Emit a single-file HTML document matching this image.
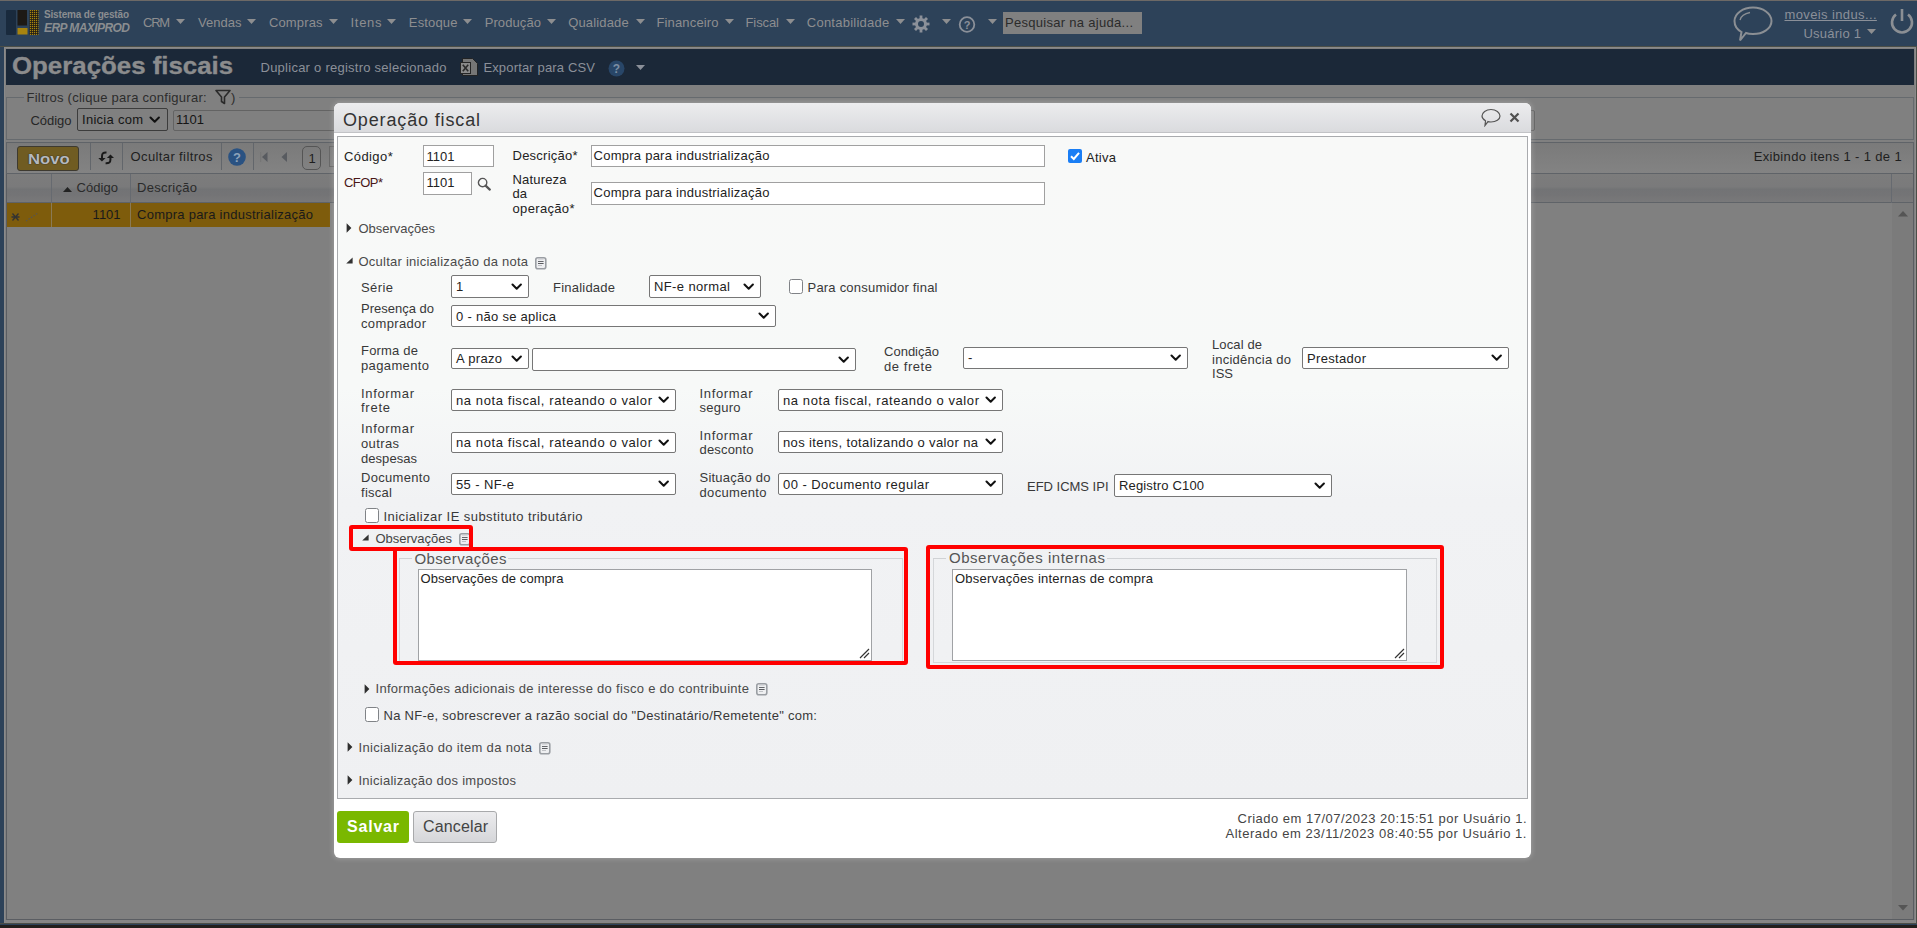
<!DOCTYPE html><html><head><meta charset="utf-8"><style>html,body{margin:0;padding:0;width:1917px;height:928px;overflow:hidden;position:relative;background:#808080;font-family:"Liberation Sans",sans-serif}</style></head><body><div style="position:absolute;left:0px;top:0px;width:1917px;height:1px;box-sizing:border-box;background:#6d6966"></div>
<div style="position:absolute;left:0px;top:1px;width:1917px;height:45px;box-sizing:border-box;background:#2d4259"></div>
<div style="position:absolute;left:0px;top:46px;width:4px;height:879px;box-sizing:border-box;background:#2d4259"></div>
<div style="position:absolute;left:0px;top:46px;width:1917px;height:1px;box-sizing:border-box;background:#4b4e47"></div>
<div style="position:absolute;left:4px;top:47px;width:1912px;height:876px;box-sizing:border-box;background:#8a8a8a"></div>
<div style="position:absolute;left:5px;top:48px;width:1910px;height:874px;box-sizing:border-box;background:#808080"></div>
<div style="position:absolute;left:1916px;top:46px;width:1px;height:879px;box-sizing:border-box;background:#4b4e47"></div>
<div style="position:absolute;left:5px;top:920px;width:1910px;height:3px;box-sizing:border-box;background:#868686"></div>
<div style="position:absolute;left:0px;top:923px;width:1917px;height:1px;box-sizing:border-box;background:#4b4e47"></div>
<div style="position:absolute;left:0px;top:924px;width:1917px;height:1px;box-sizing:border-box;background:#2d4259"></div>
<div style="position:absolute;left:0px;top:925px;width:1917px;height:3px;box-sizing:border-box;background:#221f1c"></div>
<div style="position:absolute;left:6px;top:49px;width:1908px;height:36px;box-sizing:border-box;background:#1b2838"></div>
<svg style="position:absolute;left:6px;top:10px" width="34" height="26"><defs><pattern id="gd" width="2" height="2" patternUnits="userSpaceOnUse"><rect width="2" height="2" fill="#1e1a14"/><rect width="1.2" height="1.2" fill="#a8840f"/></pattern></defs><rect x="0" y="0" width="10" height="25" rx="1" fill="#192a3d"/><rect x="11.5" y="0" width="9.5" height="15.5" fill="#1d1915"/><rect x="11.5" y="18" width="10" height="6.5" fill="#a8840f"/><rect x="23.5" y="0" width="9" height="25" fill="url(#gd)"/></svg>
<div style="position:absolute;left:44.00px;top:9.64px;font:bold 10px 'Liberation Sans', sans-serif;line-height:10px;color:#8a8d90;white-space:pre;letter-spacing:-0.176px;">Sistema de gestão</div>
<div style="position:absolute;left:44.00px;top:22.44px;font:bold italic 12px 'Liberation Sans', sans-serif;line-height:12px;color:#8a8d90;white-space:pre;letter-spacing:-0.567px;">ERP MAXIPROD</div>
<div style="position:absolute;left:143.10px;top:16.00px;font:13px 'Liberation Sans', sans-serif;line-height:13px;color:#8d8e90;white-space:pre;letter-spacing:-1.255px;">CRM</div>
<svg style="position:absolute;left:176.3px;top:18.5px" width="9" height="5"><path d="M0 0H9L4.5 5Z" fill="#8d8e90"/></svg>
<div style="position:absolute;left:198.00px;top:16.00px;font:13px 'Liberation Sans', sans-serif;line-height:13px;color:#8d8e90;white-space:pre;letter-spacing:0.025px;">Vendas</div>
<svg style="position:absolute;left:247px;top:18.5px" width="9" height="5"><path d="M0 0H9L4.5 5Z" fill="#8d8e90"/></svg>
<div style="position:absolute;left:269.00px;top:16.00px;font:13px 'Liberation Sans', sans-serif;line-height:13px;color:#8d8e90;white-space:pre;letter-spacing:0.125px;">Compras</div>
<svg style="position:absolute;left:329px;top:18.5px" width="9" height="5"><path d="M0 0H9L4.5 5Z" fill="#8d8e90"/></svg>
<div style="position:absolute;left:350.50px;top:16.00px;font:13px 'Liberation Sans', sans-serif;line-height:13px;color:#8d8e90;white-space:pre;letter-spacing:0.703px;">Itens</div>
<svg style="position:absolute;left:387px;top:18.5px" width="9" height="5"><path d="M0 0H9L4.5 5Z" fill="#8d8e90"/></svg>
<div style="position:absolute;left:408.80px;top:16.00px;font:13px 'Liberation Sans', sans-serif;line-height:13px;color:#8d8e90;white-space:pre;letter-spacing:0.166px;">Estoque</div>
<svg style="position:absolute;left:463px;top:18.5px" width="9" height="5"><path d="M0 0H9L4.5 5Z" fill="#8d8e90"/></svg>
<div style="position:absolute;left:484.70px;top:16.00px;font:13px 'Liberation Sans', sans-serif;line-height:13px;color:#8d8e90;white-space:pre;letter-spacing:0.092px;">Produção</div>
<svg style="position:absolute;left:547px;top:18.5px" width="9" height="5"><path d="M0 0H9L4.5 5Z" fill="#8d8e90"/></svg>
<div style="position:absolute;left:568.20px;top:16.00px;font:13px 'Liberation Sans', sans-serif;line-height:13px;color:#8d8e90;white-space:pre;letter-spacing:0.152px;">Qualidade</div>
<svg style="position:absolute;left:636px;top:18.5px" width="9" height="5"><path d="M0 0H9L4.5 5Z" fill="#8d8e90"/></svg>
<div style="position:absolute;left:656.50px;top:16.00px;font:13px 'Liberation Sans', sans-serif;line-height:13px;color:#8d8e90;white-space:pre;letter-spacing:0.144px;">Financeiro</div>
<svg style="position:absolute;left:725px;top:18.5px" width="9" height="5"><path d="M0 0H9L4.5 5Z" fill="#8d8e90"/></svg>
<div style="position:absolute;left:745.50px;top:16.00px;font:13px 'Liberation Sans', sans-serif;line-height:13px;color:#8d8e90;white-space:pre;letter-spacing:-0.091px;">Fiscal</div>
<svg style="position:absolute;left:786px;top:18.5px" width="9" height="5"><path d="M0 0H9L4.5 5Z" fill="#8d8e90"/></svg>
<div style="position:absolute;left:806.80px;top:16.00px;font:13px 'Liberation Sans', sans-serif;line-height:13px;color:#8d8e90;white-space:pre;letter-spacing:0.240px;">Contabilidade</div>
<svg style="position:absolute;left:895.6px;top:18.5px" width="9" height="5"><path d="M0 0H9L4.5 5Z" fill="#8d8e90"/></svg>
<svg style="position:absolute;left:912px;top:15px" width="18" height="18" viewBox="0 0 18 18"><g fill="#8b9099"><circle cx="9" cy="9" r="6"/><rect x="7.6" y="0.5" width="2.8" height="4" transform="rotate(0 9 9)"/><rect x="7.6" y="0.5" width="2.8" height="4" transform="rotate(45 9 9)"/><rect x="7.6" y="0.5" width="2.8" height="4" transform="rotate(90 9 9)"/><rect x="7.6" y="0.5" width="2.8" height="4" transform="rotate(135 9 9)"/><rect x="7.6" y="0.5" width="2.8" height="4" transform="rotate(180 9 9)"/><rect x="7.6" y="0.5" width="2.8" height="4" transform="rotate(225 9 9)"/><rect x="7.6" y="0.5" width="2.8" height="4" transform="rotate(270 9 9)"/><rect x="7.6" y="0.5" width="2.8" height="4" transform="rotate(315 9 9)"/></g><circle cx="9" cy="9" r="3" fill="#2d4259"/></svg>
<svg style="position:absolute;left:942px;top:19px" width="9" height="5"><path d="M0 0H9L4.5 5Z" fill="#8d8e90"/></svg>
<svg style="position:absolute;left:958px;top:16px" width="18" height="17" viewBox="0 0 18 17"><circle cx="9" cy="8.5" r="7.3" fill="none" stroke="#8b9099" stroke-width="1.8"/><text x="9" y="13" text-anchor="middle" font-family="Liberation Sans" font-weight="bold" font-size="11" fill="#8b9099">?</text></svg>
<svg style="position:absolute;left:988px;top:19px" width="9" height="5"><path d="M0 0H9L4.5 5Z" fill="#8d8e90"/></svg>
<div style="position:absolute;left:1003px;top:12px;width:139px;height:22px;box-sizing:border-box;background:#808080"></div>
<div style="position:absolute;left:1005.00px;top:16.20px;font:13px 'Liberation Sans', sans-serif;line-height:13px;color:#2b2b2b;white-space:pre;letter-spacing:0.293px;">Pesquisar na ajuda...</div>
<svg style="position:absolute;left:1733px;top:6px" width="41" height="36" viewBox="0 0 41 36"><path d="M20 1.5C30 1.5 38.5 7.5 38.5 15C38.5 22.5 30 28 20 28C17.5 28 15 27.8 13 27L7 34.5L8.5 26C4 23.5 1.5 19.5 1.5 15C1.5 7.5 10 1.5 20 1.5Z" fill="none" stroke="#8b8f94" stroke-width="2"/><path d="M7 14C8 10 12 7.5 17 6.5" fill="none" stroke="#8b8f94" stroke-width="1.3"/></svg>
<div style="position:absolute;left:1784.50px;top:8.00px;font:13px 'Liberation Sans', sans-serif;line-height:13px;color:#8b9099;white-space:pre;letter-spacing:0.378px;text-decoration:underline">moveis indus...</div>
<div style="position:absolute;left:1803.50px;top:26.50px;font:13px 'Liberation Sans', sans-serif;line-height:13px;color:#8b9099;white-space:pre;letter-spacing:0.232px;">Usuário 1</div>
<svg style="position:absolute;left:1867px;top:29px" width="9" height="5"><path d="M0 0H9L4.5 5Z" fill="#8d8e90"/></svg>
<svg style="position:absolute;left:1889px;top:8px" width="26" height="27" viewBox="0 0 26 27"><path d="M7 6.5A10 10 0 1 0 19 6.5" fill="none" stroke="#8b8f94" stroke-width="2.6"/><path d="M13 1V13" stroke="#8b8f94" stroke-width="2.6"/></svg>
<div style="position:absolute;left:12.00px;top:54.28px;font:bold 24px 'Liberation Sans', sans-serif;line-height:24px;color:#8b8c8d;white-space:pre;transform:scaleX(1.0760);transform-origin:left center;-webkit-text-stroke:0.35px #8b8c8d">Operações fiscais</div>
<div style="position:absolute;left:260.50px;top:60.70px;font:13px 'Liberation Sans', sans-serif;line-height:13px;color:#8b9099;white-space:pre;letter-spacing:0.251px;">Duplicar o registro selecionado</div>
<svg style="position:absolute;left:460px;top:58px" width="19" height="19"><path d="M2.5 0.5H12.5L17.5 5.5V17.5H2.5Z" fill="#767676" stroke="#1e1e1e" stroke-width="0.9"/><rect x="0.5" y="4.5" width="10" height="11" fill="#8a8a8a" stroke="#262626" stroke-width="1"/><path d="M2.8 6.8L8.2 13.2M8.2 6.8L2.8 13.2" stroke="#2a2a2a" stroke-width="1.6"/></svg>
<div style="position:absolute;left:483.40px;top:60.70px;font:13px 'Liberation Sans', sans-serif;line-height:13px;color:#8b9099;white-space:pre;letter-spacing:0.156px;">Exportar para CSV</div>
<svg style="position:absolute;left:608px;top:60px" width="17" height="17"><circle cx="8.5" cy="8.5" r="8" fill="#284668"/><text x="8.5" y="13" text-anchor="middle" font-family="Liberation Sans" font-weight="bold" font-size="12" fill="#7d8fa3">?</text></svg>
<svg style="position:absolute;left:636px;top:65px" width="9" height="5"><path d="M0 0H9L4.5 5Z" fill="#8b9099"/></svg>
<div style="position:absolute;left:6px;top:97px;width:1908px;height:43px;box-sizing:border-box;border:1px solid #666a6e;border-top:none"></div>
<div style="position:absolute;left:6px;top:97px;width:18px;height:1px;box-sizing:border-box;background:#666a6e"></div>
<div style="position:absolute;left:239px;top:97px;width:1675px;height:1px;box-sizing:border-box;background:#666a6e"></div>
<div style="position:absolute;left:26.50px;top:90.80px;font:13px 'Liberation Sans', sans-serif;line-height:13px;color:#2c2c2c;white-space:pre;letter-spacing:0.263px;">Filtros (clique para configurar: </div>
<svg style="position:absolute;left:215px;top:89px" width="16" height="16"><path d="M1 1.5H15L9.5 8V14.5L6.5 12.5V8Z" fill="none" stroke="#2a2a2a" stroke-width="1.6" stroke-linejoin="round"/></svg>
<div style="position:absolute;left:231.00px;top:90.80px;font:13px 'Liberation Sans', sans-serif;line-height:13px;color:#2c2c2c;white-space:pre;">)</div>
<div style="position:absolute;left:30.50px;top:113.80px;font:13px 'Liberation Sans', sans-serif;line-height:13px;color:#262626;white-space:pre;letter-spacing:-0.041px;">Código</div>
<div style="position:absolute;left:77px;top:108px;width:91px;height:23px;box-sizing:border-box;border:1px solid #3c3c3c;border-radius:2px"></div>
<div style="position:absolute;left:82.00px;top:113.00px;font:13px 'Liberation Sans', sans-serif;line-height:13px;color:#151515;white-space:pre;letter-spacing:0.274px;">Inicia com</div>
<svg style="position:absolute;left:149.3px;top:115.9px" width="11.4" height="7.2"><path d="M1.5 1.5L5.7 5.7L9.9 1.5" fill="none" stroke="#111" stroke-width="2.0" stroke-linecap="round" stroke-linejoin="round"/></svg>
<div style="position:absolute;left:173px;top:110px;width:1362px;height:21px;box-sizing:border-box;border:1px solid #636363;border-radius:2px"></div>
<div style="position:absolute;left:176.00px;top:113.00px;font:13px 'Liberation Sans', sans-serif;line-height:13px;color:#151515;white-space:pre;letter-spacing:0.010px;">1101</div>
<div style="position:absolute;left:6px;top:142px;width:1908px;height:32px;box-sizing:border-box;border:1px solid #5f6368;background:linear-gradient(#7a7a7a,#838383)"></div>
<div style="position:absolute;left:17px;top:146px;width:62px;height:25px;box-sizing:border-box;background:#705c22;border:1px solid #3e3a30;border-radius:3px"></div>
<div style="position:absolute;left:28.00px;top:151.95px;font:bold 14px 'Liberation Sans', sans-serif;line-height:14px;color:#b6b9bc;white-space:pre;transform:scaleX(1.1912);transform-origin:left center;text-shadow:0 0 1px #2a2a2a,0 0 1px #2a2a2a">Novo</div>
<div style="position:absolute;left:89.5px;top:143px;width:1.0px;height:27px;box-sizing:border-box;background:#62666b"></div>
<div style="position:absolute;left:122.4px;top:143px;width:1.0px;height:27px;box-sizing:border-box;background:#62666b"></div>
<div style="position:absolute;left:220.5px;top:143px;width:1.0px;height:27px;box-sizing:border-box;background:#62666b"></div>
<div style="position:absolute;left:253.3px;top:143px;width:1.0px;height:27px;box-sizing:border-box;background:#62666b"></div>
<svg style="position:absolute;left:97px;top:150px" width="18" height="15"><g fill="none" stroke="#1a1a1a" stroke-width="2"><path d="M9.5 2.6C6.2 2.4 5 3.6 5 6.2V8.6"/><path d="M13.4 7.4V9.8C13.4 12.4 12.2 13.4 8.6 13.2"/></g><path d="M1.3 8H8.6L4.95 11.5Z" fill="#1a1a1a"/><path d="M9.9 8H17L13.45 4.5Z" fill="#1a1a1a"/></svg>
<div style="position:absolute;left:130.50px;top:150.00px;font:13px 'Liberation Sans', sans-serif;line-height:13px;color:#1e1e1e;white-space:pre;letter-spacing:0.387px;">Ocultar filtros</div>
<svg style="position:absolute;left:228px;top:148px" width="18" height="18"><circle cx="9" cy="9" r="8.8" fill="#2a5282"/><text x="9" y="14" text-anchor="middle" font-family="Liberation Sans" font-weight="bold" font-size="13" fill="#8ea3ba">?</text></svg>
<svg style="position:absolute;left:259px;top:151px" width="32" height="12"><rect x="1" y="1" width="1.2" height="10" fill="#767676"/><path d="M8.5 1V11L3 6Z" fill="#585b60"/><path d="M28 1V11L22.5 6Z" fill="#585b60"/></svg>
<div style="position:absolute;left:302px;top:146px;width:19px;height:24px;box-sizing:border-box;border:1px solid #555;border-radius:5px"></div>
<div style="position:absolute;left:308.50px;top:151.50px;font:13px 'Liberation Sans', sans-serif;line-height:13px;color:#1e1e1e;white-space:pre;">1</div>
<div style="position:absolute;left:329px;top:146px;width:6px;height:21px;box-sizing:border-box;border:1px solid #666;border-right:none"></div>
<div style="position:absolute;right:15.00px;top:149.60px;font:13px 'Liberation Sans', sans-serif;line-height:13px;color:#1e1e1e;white-space:pre;letter-spacing:0.355px;">Exibindo itens 1 - 1 de 1</div>
<div style="position:absolute;left:6px;top:174px;width:1908px;height:746px;box-sizing:border-box;border:1px solid #5a5d62;border-top:none"></div>
<div style="position:absolute;left:7px;top:174px;width:1906px;height:29px;box-sizing:border-box;background:linear-gradient(#7c7c7c 0%,#7a7a7b 45%,#727375 55%,#747476 75%,#79797a 100%);border-bottom:1px solid #5f6368"></div>
<div style="position:absolute;left:50.5px;top:174px;width:1.0px;height:29px;box-sizing:border-box;background:#666a70"></div>
<div style="position:absolute;left:129.5px;top:174px;width:1.0px;height:29px;box-sizing:border-box;background:#666a70"></div>
<div style="position:absolute;left:1891px;top:174px;width:1px;height:29px;box-sizing:border-box;background:#666a70"></div>
<svg style="position:absolute;left:63px;top:187px" width="9" height="5"><path d="M0 5H9L4.5 0Z" fill="#222"/></svg>
<div style="position:absolute;left:76.50px;top:181.00px;font:13px 'Liberation Sans', sans-serif;line-height:13px;color:#2a2a2a;white-space:pre;letter-spacing:0.059px;">Código</div>
<div style="position:absolute;left:137.00px;top:181.00px;font:13px 'Liberation Sans', sans-serif;line-height:13px;color:#2a2a2a;white-space:pre;letter-spacing:0.275px;">Descrição</div>
<div style="position:absolute;left:7px;top:203px;width:323px;height:24px;box-sizing:border-box;background:#7e5c0c"></div>
<div style="position:absolute;left:50.5px;top:203px;width:1.0px;height:24px;box-sizing:border-box;background:#8a7a55"></div>
<div style="position:absolute;left:129.5px;top:203px;width:1.0px;height:24px;box-sizing:border-box;background:#8a7a55"></div>
<div style="position:absolute;right:1796.40px;top:207.80px;font:13px 'Liberation Sans', sans-serif;line-height:13px;color:#1a1a1a;white-space:pre;letter-spacing:0.010px;">1101</div>
<div style="position:absolute;left:137.00px;top:207.80px;font:13px 'Liberation Sans', sans-serif;line-height:13px;color:#1a1a1a;white-space:pre;letter-spacing:0.256px;">Compra para industrialização</div>
<svg style="position:absolute;left:11px;top:212px" width="30" height="10"><path d="M1.5 1.5L7.5 8.5M7.5 1.5L1.5 8.5M0.5 5H8.5" stroke="#333" stroke-width="1.3"/><path d="M15 9L27 1" stroke="#555" stroke-width="1.2" stroke-dasharray="1.5 1.5"/></svg>
<div style="position:absolute;left:1892px;top:203px;width:21px;height:716px;box-sizing:border-box;background:#7b7b7b"></div>
<svg style="position:absolute;left:1898px;top:211px" width="10" height="6"><path d="M0 5.5H10L5 0Z" fill="#555"/></svg>
<svg style="position:absolute;left:1898px;top:905px" width="10" height="6"><path d="M0 0H10L5 5.5Z" fill="#555"/></svg>
<div style="position:absolute;left:334px;top:103px;width:1197px;height:755px;box-sizing:border-box;background:#fff;border-radius:6px;box-shadow:0 0 5px 1px rgba(255,255,255,0.22)"></div>
<div style="position:absolute;left:334px;top:103px;width:1197px;height:30px;box-sizing:border-box;background:linear-gradient(#ececee,#dadbde);border-radius:6px 6px 0 0;border-bottom:1px solid #c2c3c6"></div>
<div style="position:absolute;left:343.00px;top:111.26px;font:18px 'Liberation Sans', sans-serif;line-height:18px;color:#333;white-space:pre;letter-spacing:0.853px;">Operação fiscal</div>
<svg style="position:absolute;left:1481px;top:108px" width="20" height="19" viewBox="0 0 20 19"><path d="M10 1.5C15 1.5 19 4.5 19 8C19 11.5 15 14 10 14C9 14 8 14 7 13.6L4 17.5L4.5 12.8C2.5 11.6 1 10 1 8C1 4.5 5 1.5 10 1.5Z" fill="none" stroke="#555" stroke-width="1.2"/></svg>
<svg style="position:absolute;left:1509px;top:112px" width="11" height="11"><path d="M1.5 1.5L9.5 9.5M9.5 1.5L1.5 9.5" stroke="#505050" stroke-width="2.2"/></svg>
<div style="position:absolute;left:337px;top:136px;width:1191px;height:663px;box-sizing:border-box;border:1px solid #a9abae;background:linear-gradient(#f8f9f8 0%,#f7f9f8 38%,#f1f2f4 55%,#eff0f2 100%)"></div>
<div style="position:absolute;left:344.00px;top:149.70px;font:13px 'Liberation Sans', sans-serif;line-height:13px;color:#222;white-space:pre;letter-spacing:0.406px;">Código*</div>
<div style="position:absolute;left:423px;top:145px;width:71px;height:22px;box-sizing:border-box;background:#fff;border:1px solid #a0a0a0"></div>
<div style="position:absolute;left:426.50px;top:149.50px;font:13px 'Liberation Sans', sans-serif;line-height:13px;color:#222;white-space:pre;letter-spacing:0.010px;">1101</div>
<div style="position:absolute;left:344.00px;top:176.40px;font:13px 'Liberation Sans', sans-serif;line-height:13px;color:#4a1818;white-space:pre;letter-spacing:-0.543px;">CFOP*</div>
<div style="position:absolute;left:423px;top:172px;width:49px;height:23px;box-sizing:border-box;background:#fff;border:1px solid #a0a0a0"></div>
<div style="position:absolute;left:426.50px;top:176.30px;font:13px 'Liberation Sans', sans-serif;line-height:13px;color:#222;white-space:pre;letter-spacing:0.010px;">1101</div>
<svg style="position:absolute;left:477px;top:177px" width="15" height="14"><circle cx="5.6" cy="5.6" r="4.2" fill="none" stroke="#555" stroke-width="1.4"/><path d="M8.6 8.6L12.8 12.6" stroke="#555" stroke-width="2.2" stroke-linecap="round"/></svg>
<div style="position:absolute;left:512.50px;top:149.30px;font:13px 'Liberation Sans', sans-serif;line-height:13px;color:#222;white-space:pre;letter-spacing:0.238px;">Descrição*</div>
<div style="position:absolute;left:591px;top:145px;width:454px;height:22px;box-sizing:border-box;background:#fff;border:1px solid #a0a0a0"></div>
<div style="position:absolute;left:593.50px;top:148.80px;font:13px 'Liberation Sans', sans-serif;line-height:13px;color:#222;white-space:pre;letter-spacing:0.256px;">Compra para industrialização</div>
<div style="position:absolute;left:512.50px;top:172.80px;font:13px 'Liberation Sans', sans-serif;line-height:13px;color:#222;white-space:pre;letter-spacing:0.179px;">Natureza</div>
<div style="position:absolute;left:512.50px;top:187.40px;font:13px 'Liberation Sans', sans-serif;line-height:13px;color:#222;white-space:pre;">da</div>
<div style="position:absolute;left:512.50px;top:202.00px;font:13px 'Liberation Sans', sans-serif;line-height:13px;color:#222;white-space:pre;letter-spacing:0.340px;">operação*</div>
<div style="position:absolute;left:591px;top:182px;width:454px;height:23px;box-sizing:border-box;background:#fff;border:1px solid #a0a0a0"></div>
<div style="position:absolute;left:593.50px;top:186.30px;font:13px 'Liberation Sans', sans-serif;line-height:13px;color:#222;white-space:pre;letter-spacing:0.256px;">Compra para industrialização</div>
<svg style="position:absolute;left:1068px;top:149px" width="14" height="14"><rect x="0" y="0" width="14" height="14" rx="2" fill="#1a7ef5"/><path d="M3 7.2L5.8 10L11 3.8" fill="none" stroke="#fff" stroke-width="2"/></svg>
<div style="position:absolute;left:1086.00px;top:151.00px;font:13px 'Liberation Sans', sans-serif;line-height:13px;color:#222;white-space:pre;letter-spacing:0.273px;">Ativa</div>
<svg style="position:absolute;left:346px;top:223px" width="6" height="10"><path d="M0.6 0.3L5.4 5L0.6 9.8Z" fill="#2e2e2e"/></svg>
<div style="position:absolute;left:358.50px;top:221.60px;font:13px 'Liberation Sans', sans-serif;line-height:13px;color:#4a4a4a;white-space:pre;letter-spacing:-0.009px;">Observações</div>
<svg style="position:absolute;left:346px;top:257px" width="8" height="8"><path d="M6.6 0.4V6.4H0.2Z" fill="#333"/></svg>
<div style="position:absolute;left:358.50px;top:254.70px;font:13px 'Liberation Sans', sans-serif;line-height:13px;color:#4a4a4a;white-space:pre;letter-spacing:0.247px;">Ocultar inicialização da nota</div>
<svg style="position:absolute;left:535px;top:257px" width="12" height="13"><rect x="0.8" y="0.8" width="10" height="11" rx="2" fill="#eeeff1" stroke="#9a9ea3" stroke-width="1.6"/><path d="M3 2.5H8.6" stroke="#d8d9dc" stroke-width="1"/><path d="M3 4.5H8.6" stroke="#66686c" stroke-width="1"/><path d="M3 6.5H8.6" stroke="#5a5c60" stroke-width="1"/><path d="M3 8.5H7" stroke="#c0c2c6" stroke-width="1"/></svg>
<div style="position:absolute;left:361.00px;top:280.70px;font:13px 'Liberation Sans', sans-serif;line-height:13px;color:#383838;white-space:pre;letter-spacing:0.410px;">Série</div>
<div style="position:absolute;left:451px;top:275px;width:78px;height:23px;box-sizing:border-box;background:#fff;border:1px solid #767676;border-radius:2px"></div>
<div style="position:absolute;left:452px;top:276px;width:57px;height:21px;overflow:hidden"><div style="position:absolute;left:4.00px;top:4.00px;font:13px 'Liberation Sans', sans-serif;line-height:13px;color:#222;white-space:pre;">1</div></div>
<svg style="position:absolute;left:510.79999999999995px;top:282.59999999999997px" width="11.4" height="7.2"><path d="M1.5 1.5L5.7 5.7L9.9 1.5" fill="none" stroke="#111" stroke-width="2.0" stroke-linecap="round" stroke-linejoin="round"/></svg>
<div style="position:absolute;left:553.00px;top:280.70px;font:13px 'Liberation Sans', sans-serif;line-height:13px;color:#383838;white-space:pre;letter-spacing:0.222px;">Finalidade</div>
<div style="position:absolute;left:649px;top:275px;width:112px;height:23px;box-sizing:border-box;background:#fff;border:1px solid #767676;border-radius:2px"></div>
<div style="position:absolute;left:650px;top:276px;width:91px;height:21px;overflow:hidden"><div style="position:absolute;left:4.00px;top:4.00px;font:13px 'Liberation Sans', sans-serif;line-height:13px;color:#222;white-space:pre;letter-spacing:0.375px;">NF-e normal</div></div>
<svg style="position:absolute;left:742.8px;top:282.59999999999997px" width="11.4" height="7.2"><path d="M1.5 1.5L5.7 5.7L9.9 1.5" fill="none" stroke="#111" stroke-width="2.0" stroke-linecap="round" stroke-linejoin="round"/></svg>
<div style="position:absolute;left:789px;top:279px;width:14px;height:14.5px;box-sizing:border-box;background:#fff;border:1px solid #808387;border-radius:2.5px"></div>
<div style="position:absolute;left:807.50px;top:280.70px;font:13px 'Liberation Sans', sans-serif;line-height:13px;color:#383838;white-space:pre;letter-spacing:0.213px;">Para consumidor final</div>
<div style="position:absolute;left:361.00px;top:302.40px;font:13px 'Liberation Sans', sans-serif;line-height:13px;color:#383838;white-space:pre;">Presença do</div>
<div style="position:absolute;left:361.00px;top:317.30px;font:13px 'Liberation Sans', sans-serif;line-height:13px;color:#383838;white-space:pre;letter-spacing:0.357px;">comprador</div>
<div style="position:absolute;left:451px;top:305px;width:325px;height:22px;box-sizing:border-box;background:#fff;border:1px solid #767676;border-radius:2px"></div>
<div style="position:absolute;left:452px;top:306px;width:304px;height:20px;overflow:hidden"><div style="position:absolute;left:4.00px;top:3.50px;font:13px 'Liberation Sans', sans-serif;line-height:13px;color:#222;white-space:pre;letter-spacing:0.287px;">0 - não se aplica</div></div>
<svg style="position:absolute;left:757.8px;top:312.09999999999997px" width="11.4" height="7.2"><path d="M1.5 1.5L5.7 5.7L9.9 1.5" fill="none" stroke="#111" stroke-width="2.0" stroke-linecap="round" stroke-linejoin="round"/></svg>
<div style="position:absolute;left:361.00px;top:344.40px;font:13px 'Liberation Sans', sans-serif;line-height:13px;color:#383838;white-space:pre;letter-spacing:0.194px;">Forma de</div>
<div style="position:absolute;left:361.00px;top:359.40px;font:13px 'Liberation Sans', sans-serif;line-height:13px;color:#383838;white-space:pre;letter-spacing:0.367px;">pagamento</div>
<div style="position:absolute;left:451px;top:348px;width:78px;height:21px;box-sizing:border-box;background:#fff;border:1px solid #767676;border-radius:2px"></div>
<div style="position:absolute;left:452px;top:349px;width:57px;height:19px;overflow:hidden"><div style="position:absolute;left:4.00px;top:3.00px;font:13px 'Liberation Sans', sans-serif;line-height:13px;color:#222;white-space:pre;letter-spacing:0.318px;">A prazo</div></div>
<svg style="position:absolute;left:510.79999999999995px;top:354.59999999999997px" width="11.4" height="7.2"><path d="M1.5 1.5L5.7 5.7L9.9 1.5" fill="none" stroke="#111" stroke-width="2.0" stroke-linecap="round" stroke-linejoin="round"/></svg>
<div style="position:absolute;left:532px;top:348px;width:324px;height:23px;box-sizing:border-box;background:#fff;border:1px solid #767676;border-radius:2px"></div>
<svg style="position:absolute;left:837.8px;top:355.59999999999997px" width="11.4" height="7.2"><path d="M1.5 1.5L5.7 5.7L9.9 1.5" fill="none" stroke="#111" stroke-width="2.0" stroke-linecap="round" stroke-linejoin="round"/></svg>
<div style="position:absolute;left:884.00px;top:344.60px;font:13px 'Liberation Sans', sans-serif;line-height:13px;color:#383838;white-space:pre;letter-spacing:0.009px;">Condição</div>
<div style="position:absolute;left:884.00px;top:359.70px;font:13px 'Liberation Sans', sans-serif;line-height:13px;color:#383838;white-space:pre;letter-spacing:0.558px;">de frete</div>
<div style="position:absolute;left:963px;top:347px;width:225px;height:22px;box-sizing:border-box;background:#fff;border:1px solid #767676;border-radius:2px"></div>
<div style="position:absolute;left:964px;top:348px;width:204px;height:20px;overflow:hidden"><div style="position:absolute;left:4.00px;top:3.00px;font:13px 'Liberation Sans', sans-serif;line-height:13px;color:#222;white-space:pre;">-</div></div>
<svg style="position:absolute;left:1169.8px;top:354.09999999999997px" width="11.4" height="7.2"><path d="M1.5 1.5L5.7 5.7L9.9 1.5" fill="none" stroke="#111" stroke-width="2.0" stroke-linecap="round" stroke-linejoin="round"/></svg>
<div style="position:absolute;left:1212.00px;top:337.60px;font:13px 'Liberation Sans', sans-serif;line-height:13px;color:#383838;white-space:pre;letter-spacing:0.121px;">Local de</div>
<div style="position:absolute;left:1212.00px;top:352.70px;font:13px 'Liberation Sans', sans-serif;line-height:13px;color:#383838;white-space:pre;letter-spacing:0.259px;">incidência do</div>
<div style="position:absolute;left:1212.00px;top:367.40px;font:13px 'Liberation Sans', sans-serif;line-height:13px;color:#383838;white-space:pre;letter-spacing:0.016px;">ISS</div>
<div style="position:absolute;left:1302px;top:347px;width:207px;height:22px;box-sizing:border-box;background:#fff;border:1px solid #767676;border-radius:2px"></div>
<div style="position:absolute;left:1303px;top:348px;width:186px;height:20px;overflow:hidden"><div style="position:absolute;left:4.00px;top:3.50px;font:13px 'Liberation Sans', sans-serif;line-height:13px;color:#222;white-space:pre;letter-spacing:0.328px;">Prestador</div></div>
<svg style="position:absolute;left:1490.8px;top:354.09999999999997px" width="11.4" height="7.2"><path d="M1.5 1.5L5.7 5.7L9.9 1.5" fill="none" stroke="#111" stroke-width="2.0" stroke-linecap="round" stroke-linejoin="round"/></svg>
<div style="position:absolute;left:361.00px;top:386.50px;font:13px 'Liberation Sans', sans-serif;line-height:13px;color:#383838;white-space:pre;letter-spacing:0.656px;">Informar</div>
<div style="position:absolute;left:361.00px;top:401.40px;font:13px 'Liberation Sans', sans-serif;line-height:13px;color:#383838;white-space:pre;letter-spacing:0.746px;">frete</div>
<div style="position:absolute;left:451px;top:389px;width:225px;height:22px;box-sizing:border-box;background:#fff;border:1px solid #767676;border-radius:2px"></div>
<div style="position:absolute;left:452px;top:390px;width:204px;height:20px;overflow:hidden"><div style="position:absolute;left:4.00px;top:3.50px;font:13px 'Liberation Sans', sans-serif;line-height:13px;color:#222;white-space:pre;letter-spacing:0.587px;">na nota fiscal, rateando o valor e</div></div>
<svg style="position:absolute;left:657.8px;top:396.09999999999997px" width="11.4" height="7.2"><path d="M1.5 1.5L5.7 5.7L9.9 1.5" fill="none" stroke="#111" stroke-width="2.0" stroke-linecap="round" stroke-linejoin="round"/></svg>
<div style="position:absolute;left:699.50px;top:386.50px;font:13px 'Liberation Sans', sans-serif;line-height:13px;color:#383838;white-space:pre;letter-spacing:0.656px;">Informar</div>
<div style="position:absolute;left:699.50px;top:401.40px;font:13px 'Liberation Sans', sans-serif;line-height:13px;color:#383838;white-space:pre;letter-spacing:0.250px;">seguro</div>
<div style="position:absolute;left:778px;top:389px;width:225px;height:22px;box-sizing:border-box;background:#fff;border:1px solid #767676;border-radius:2px"></div>
<div style="position:absolute;left:779px;top:390px;width:204px;height:20px;overflow:hidden"><div style="position:absolute;left:4.00px;top:3.50px;font:13px 'Liberation Sans', sans-serif;line-height:13px;color:#222;white-space:pre;letter-spacing:0.587px;">na nota fiscal, rateando o valor e</div></div>
<svg style="position:absolute;left:984.8px;top:396.09999999999997px" width="11.4" height="7.2"><path d="M1.5 1.5L5.7 5.7L9.9 1.5" fill="none" stroke="#111" stroke-width="2.0" stroke-linecap="round" stroke-linejoin="round"/></svg>
<div style="position:absolute;left:361.00px;top:421.70px;font:13px 'Liberation Sans', sans-serif;line-height:13px;color:#383838;white-space:pre;letter-spacing:0.656px;">Informar</div>
<div style="position:absolute;left:361.00px;top:436.60px;font:13px 'Liberation Sans', sans-serif;line-height:13px;color:#383838;white-space:pre;letter-spacing:0.372px;">outras</div>
<div style="position:absolute;left:361.00px;top:451.50px;font:13px 'Liberation Sans', sans-serif;line-height:13px;color:#383838;white-space:pre;letter-spacing:0.049px;">despesas</div>
<div style="position:absolute;left:451px;top:432px;width:225px;height:21px;box-sizing:border-box;background:#fff;border:1px solid #767676;border-radius:2px"></div>
<div style="position:absolute;left:452px;top:433px;width:204px;height:19px;overflow:hidden"><div style="position:absolute;left:4.00px;top:2.50px;font:13px 'Liberation Sans', sans-serif;line-height:13px;color:#222;white-space:pre;letter-spacing:0.587px;">na nota fiscal, rateando o valor e</div></div>
<svg style="position:absolute;left:657.8px;top:438.59999999999997px" width="11.4" height="7.2"><path d="M1.5 1.5L5.7 5.7L9.9 1.5" fill="none" stroke="#111" stroke-width="2.0" stroke-linecap="round" stroke-linejoin="round"/></svg>
<div style="position:absolute;left:699.50px;top:428.50px;font:13px 'Liberation Sans', sans-serif;line-height:13px;color:#383838;white-space:pre;letter-spacing:0.656px;">Informar</div>
<div style="position:absolute;left:699.50px;top:443.40px;font:13px 'Liberation Sans', sans-serif;line-height:13px;color:#383838;white-space:pre;letter-spacing:0.176px;">desconto</div>
<div style="position:absolute;left:778px;top:431px;width:225px;height:22px;box-sizing:border-box;background:#fff;border:1px solid #767676;border-radius:2px"></div>
<div style="position:absolute;left:779px;top:432px;width:204px;height:20px;overflow:hidden"><div style="position:absolute;left:4.00px;top:3.50px;font:13px 'Liberation Sans', sans-serif;line-height:13px;color:#222;white-space:pre;letter-spacing:0.380px;">nos itens, totalizando o valor na</div></div>
<svg style="position:absolute;left:984.8px;top:438.09999999999997px" width="11.4" height="7.2"><path d="M1.5 1.5L5.7 5.7L9.9 1.5" fill="none" stroke="#111" stroke-width="2.0" stroke-linecap="round" stroke-linejoin="round"/></svg>
<div style="position:absolute;left:361.00px;top:470.50px;font:13px 'Liberation Sans', sans-serif;line-height:13px;color:#383838;white-space:pre;letter-spacing:0.314px;">Documento</div>
<div style="position:absolute;left:361.00px;top:485.50px;font:13px 'Liberation Sans', sans-serif;line-height:13px;color:#383838;white-space:pre;letter-spacing:0.275px;">fiscal</div>
<div style="position:absolute;left:451px;top:473px;width:225px;height:22px;box-sizing:border-box;background:#fff;border:1px solid #767676;border-radius:2px"></div>
<div style="position:absolute;left:452px;top:474px;width:204px;height:20px;overflow:hidden"><div style="position:absolute;left:4.00px;top:3.50px;font:13px 'Liberation Sans', sans-serif;line-height:13px;color:#222;white-space:pre;letter-spacing:0.387px;">55 - NF-e</div></div>
<svg style="position:absolute;left:657.8px;top:480.09999999999997px" width="11.4" height="7.2"><path d="M1.5 1.5L5.7 5.7L9.9 1.5" fill="none" stroke="#111" stroke-width="2.0" stroke-linecap="round" stroke-linejoin="round"/></svg>
<div style="position:absolute;left:699.50px;top:470.50px;font:13px 'Liberation Sans', sans-serif;line-height:13px;color:#383838;white-space:pre;letter-spacing:0.233px;">Situação do</div>
<div style="position:absolute;left:699.50px;top:485.50px;font:13px 'Liberation Sans', sans-serif;line-height:13px;color:#383838;white-space:pre;letter-spacing:0.334px;">documento</div>
<div style="position:absolute;left:778px;top:473px;width:225px;height:22px;box-sizing:border-box;background:#fff;border:1px solid #767676;border-radius:2px"></div>
<div style="position:absolute;left:779px;top:474px;width:204px;height:20px;overflow:hidden"><div style="position:absolute;left:4.00px;top:3.50px;font:13px 'Liberation Sans', sans-serif;line-height:13px;color:#222;white-space:pre;letter-spacing:0.449px;">00 - Documento regular</div></div>
<svg style="position:absolute;left:984.8px;top:480.09999999999997px" width="11.4" height="7.2"><path d="M1.5 1.5L5.7 5.7L9.9 1.5" fill="none" stroke="#111" stroke-width="2.0" stroke-linecap="round" stroke-linejoin="round"/></svg>
<div style="position:absolute;left:1027.00px;top:479.90px;font:13px 'Liberation Sans', sans-serif;line-height:13px;color:#383838;white-space:pre;letter-spacing:-0.011px;">EFD ICMS IPI</div>
<div style="position:absolute;left:1114px;top:474px;width:218px;height:23px;box-sizing:border-box;background:#fff;border:1px solid #767676;border-radius:2px"></div>
<div style="position:absolute;left:1115px;top:475px;width:197px;height:21px;overflow:hidden"><div style="position:absolute;left:4.00px;top:3.50px;font:13px 'Liberation Sans', sans-serif;line-height:13px;color:#222;white-space:pre;letter-spacing:0.158px;">Registro C100</div></div>
<svg style="position:absolute;left:1313.8px;top:481.59999999999997px" width="11.4" height="7.2"><path d="M1.5 1.5L5.7 5.7L9.9 1.5" fill="none" stroke="#111" stroke-width="2.0" stroke-linecap="round" stroke-linejoin="round"/></svg>
<div style="position:absolute;left:365px;top:508px;width:14px;height:14.5px;box-sizing:border-box;background:#fff;border:1px solid #808387;border-radius:2.5px"></div>
<div style="position:absolute;left:383.50px;top:509.80px;font:13px 'Liberation Sans', sans-serif;line-height:13px;color:#383838;white-space:pre;letter-spacing:0.442px;">Inicializar IE substituto tributário</div>
<svg style="position:absolute;left:362px;top:534px" width="8" height="8"><path d="M6.6 0.4V6.4H0.2Z" fill="#333"/></svg>
<div style="position:absolute;left:375.50px;top:531.60px;font:13px 'Liberation Sans', sans-serif;line-height:13px;color:#444;white-space:pre;letter-spacing:-0.009px;">Observações</div>
<svg style="position:absolute;left:459px;top:533px" width="12" height="13"><rect x="0.8" y="0.8" width="10" height="11" rx="2" fill="#eeeff1" stroke="#9a9ea3" stroke-width="1.6"/><path d="M3 2.5H8.6" stroke="#d8d9dc" stroke-width="1"/><path d="M3 4.5H8.6" stroke="#66686c" stroke-width="1"/><path d="M3 6.5H8.6" stroke="#5a5c60" stroke-width="1"/><path d="M3 8.5H7" stroke="#c0c2c6" stroke-width="1"/></svg>
<div style="position:absolute;left:399px;top:558px;width:504px;height:105px;box-sizing:border-box;border:1px solid #d5d7da;border-top:none"></div>
<div style="position:absolute;left:399px;top:558px;width:13px;height:1px;box-sizing:border-box;background:#d0d2d5"></div>
<div style="position:absolute;left:508px;top:558px;width:395px;height:1px;box-sizing:border-box;background:#d0d2d5"></div>
<div style="position:absolute;left:414.50px;top:550.90px;font:15px 'Liberation Sans', sans-serif;line-height:15px;color:#555;white-space:pre;letter-spacing:0.362px;">Observações</div>
<div style="position:absolute;left:418px;top:569px;width:454px;height:92px;box-sizing:border-box;background:#fff;border:1px solid #a0a2a5"></div>
<div style="position:absolute;left:420.50px;top:572.30px;font:13px 'Liberation Sans', sans-serif;line-height:13px;color:#222;white-space:pre;letter-spacing:0.069px;">Observações de compra</div>
<svg style="position:absolute;left:858px;top:647px" width="12" height="12"><path d="M2 11L11 2M6 11L11 6" stroke="#333" stroke-width="1.2"/></svg>
<div style="position:absolute;left:933px;top:558px;width:504px;height:105px;box-sizing:border-box;border:1px solid #d5d7da;border-top:none"></div>
<div style="position:absolute;left:933px;top:558px;width:13px;height:1px;box-sizing:border-box;background:#d0d2d5"></div>
<div style="position:absolute;left:1107px;top:558px;width:330px;height:1px;box-sizing:border-box;background:#d0d2d5"></div>
<div style="position:absolute;left:949.00px;top:550.30px;font:15px 'Liberation Sans', sans-serif;line-height:15px;color:#555;white-space:pre;letter-spacing:0.531px;">Observações internas</div>
<div style="position:absolute;left:952px;top:569px;width:455px;height:92px;box-sizing:border-box;background:#fff;border:1px solid #a0a2a5"></div>
<div style="position:absolute;left:955.00px;top:572.00px;font:13px 'Liberation Sans', sans-serif;line-height:13px;color:#222;white-space:pre;letter-spacing:0.225px;">Observações internas de compra</div>
<svg style="position:absolute;left:1393px;top:647px" width="12" height="12"><path d="M2 11L11 2M6 11L11 6" stroke="#333" stroke-width="1.2"/></svg>
<div style="position:absolute;left:349px;top:525px;width:124px;height:26px;box-sizing:border-box;border:4px solid #ff0000;border-radius:3px"></div>
<div style="position:absolute;left:393px;top:547px;width:515px;height:118px;box-sizing:border-box;border:4px solid #ff0000;border-radius:3px"></div>
<div style="position:absolute;left:926px;top:545px;width:518px;height:124px;box-sizing:border-box;border:4px solid #ff0000;border-radius:3px"></div>
<svg style="position:absolute;left:364px;top:684px" width="6" height="10"><path d="M0.6 0.3L5.4 5L0.6 9.8Z" fill="#2e2e2e"/></svg>
<div style="position:absolute;left:375.50px;top:682.30px;font:13px 'Liberation Sans', sans-serif;line-height:13px;color:#4a4a4a;white-space:pre;letter-spacing:0.294px;">Informações adicionais de interesse do fisco e do contribuinte</div>
<svg style="position:absolute;left:756px;top:683px" width="12" height="13"><rect x="0.8" y="0.8" width="10" height="11" rx="2" fill="#eeeff1" stroke="#9a9ea3" stroke-width="1.6"/><path d="M3 2.5H8.6" stroke="#d8d9dc" stroke-width="1"/><path d="M3 4.5H8.6" stroke="#66686c" stroke-width="1"/><path d="M3 6.5H8.6" stroke="#5a5c60" stroke-width="1"/><path d="M3 8.5H7" stroke="#c0c2c6" stroke-width="1"/></svg>
<div style="position:absolute;left:365px;top:707px;width:14px;height:14.5px;box-sizing:border-box;background:#fff;border:1px solid #808387;border-radius:2.5px"></div>
<div style="position:absolute;left:383.50px;top:708.90px;font:13px 'Liberation Sans', sans-serif;line-height:13px;color:#383838;white-space:pre;letter-spacing:0.278px;">Na NF-e, sobrescrever a razão social do &quot;Destinatário/Remetente&quot; com:</div>
<svg style="position:absolute;left:347px;top:742px" width="6" height="10"><path d="M0.6 0.3L5.4 5L0.6 9.8Z" fill="#2e2e2e"/></svg>
<div style="position:absolute;left:358.50px;top:741.20px;font:13px 'Liberation Sans', sans-serif;line-height:13px;color:#4a4a4a;white-space:pre;letter-spacing:0.338px;">Inicialização do item da nota</div>
<svg style="position:absolute;left:539px;top:742px" width="12" height="13"><rect x="0.8" y="0.8" width="10" height="11" rx="2" fill="#eeeff1" stroke="#9a9ea3" stroke-width="1.6"/><path d="M3 2.5H8.6" stroke="#d8d9dc" stroke-width="1"/><path d="M3 4.5H8.6" stroke="#66686c" stroke-width="1"/><path d="M3 6.5H8.6" stroke="#5a5c60" stroke-width="1"/><path d="M3 8.5H7" stroke="#c0c2c6" stroke-width="1"/></svg>
<svg style="position:absolute;left:347px;top:775px" width="6" height="10"><path d="M0.6 0.3L5.4 5L0.6 9.8Z" fill="#2e2e2e"/></svg>
<div style="position:absolute;left:358.50px;top:773.50px;font:13px 'Liberation Sans', sans-serif;line-height:13px;color:#4a4a4a;white-space:pre;letter-spacing:0.259px;">Inicialização dos impostos</div>
<div style="position:absolute;left:337px;top:811px;width:72px;height:32px;box-sizing:border-box;background:#7ab800;border-radius:3px"></div>
<div style="position:absolute;left:347.00px;top:818.66px;font:bold 16px 'Liberation Sans', sans-serif;line-height:16px;color:#fff;white-space:pre;letter-spacing:0.791px;">Salvar</div>
<div style="position:absolute;left:413px;top:811px;width:84px;height:32px;box-sizing:border-box;background:linear-gradient(#ececee,#d5d6d9);border:1px solid #a8a9ab;border-radius:3px"></div>
<div style="position:absolute;left:423.00px;top:818.66px;font:16px 'Liberation Sans', sans-serif;line-height:16px;color:#444;white-space:pre;letter-spacing:0.138px;">Cancelar</div>
<div style="position:absolute;right:390.00px;top:812.00px;font:13px 'Liberation Sans', sans-serif;line-height:13px;color:#444;white-space:pre;letter-spacing:0.485px;">Criado em 17/07/2023 20:15:51 por Usuário 1.</div>
<div style="position:absolute;right:390.00px;top:826.70px;font:13px 'Liberation Sans', sans-serif;line-height:13px;color:#444;white-space:pre;letter-spacing:0.527px;">Alterado em 23/11/2023 08:40:55 por Usuário 1.</div></body></html>
